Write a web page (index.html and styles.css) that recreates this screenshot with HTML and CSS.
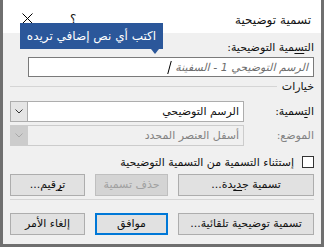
FILE: index.html
```html
<!DOCTYPE html>
<html lang="ar" dir="rtl">
<head>
  <meta charset="UTF-8">
  <title>تسمية توضيحية</title>
  <link rel="stylesheet" href="styles.css">
</head>
<body>
  <div class="dialog">
    <div class="titlebar">
      <span class="title">تسمية توضيحية</span>
      <div class="title-actions">
        <span class="help">؟</span>
        <svg class="close" width="11" height="11" viewBox="0 0 11 11">
          <path d="M0.5 0.5 L10.5 10.5 M10.5 0.5 L0.5 10.5" stroke="#000" stroke-width="1" fill="none"/>
        </svg>
      </div>
    </div>

    <div class="tooltip">اكتب أي نص إضافي تريده</div>

    <div class="content">
      <div class="field-label">الت<u>س</u>مية التوضيحية:</div>
      <div class="textbox">
        <span class="textbox-value">الرسم التوضيحي 1 - السفينة</span><span class="caret"></span>
      </div>

      <div class="group-head">
        <span>خيارات</span>
        <span class="group-line"></span>
      </div>

      <div class="select-row">
        <span class="select-label">ال<u>ت</u>سمية:</span>
        <div class="select">
          <span class="select-value">الرسم التوضيحي</span>
          <span class="select-arrow">
            <svg width="8" height="5" viewBox="0 0 8 5"><path d="M0.5 0.5 L4 4 L7.5 0.5" stroke="#333" fill="none"/></svg>
          </span>
        </div>
      </div>

      <div class="select-row disabled">
        <span class="select-label">الموضع:</span>
        <div class="select">
          <span class="select-value">أسفل العنصر المحدد</span>
          <span class="select-arrow">
            <svg width="8" height="5" viewBox="0 0 8 5"><path d="M0.5 0.5 L4 4 L7.5 0.5" stroke="#a8a8a8" fill="none"/></svg>
          </span>
        </div>
      </div>

      <div class="check-row">
        <span class="checkbox"></span>
        <span><u>إ</u>ستثناء التسمية من التسمية التوضيحية</span>
      </div>

      <div class="btn-row">
        <a href="#" class="btn">تسمية ج<u>دي</u>دة...</a>
        <a href="#" class="btn btn-disabled">حذف تسمية</a>
        <a href="#" class="btn">ت<u>ر</u>قيم...</a>
      </div>

      <div class="separator"></div>

      <div class="btn-row">
        <a href="#" class="btn">تسمية توضيحية تلقائية...</a>
        <a href="#" class="btn btn-default">موافق</a>
        <a href="#" class="btn">إلغاء الأمر</a>
      </div>
    </div>
  </div>
</body>
</html>
```

FILE: styles.css
```css
* {
  margin: 0;
  padding: 0;
  box-sizing: border-box;
}
body {
  font-family: 'DejaVu Sans', sans-serif;
  font-size: 11px;
  color: #111;
  background: #fff;
}
u {
  text-decoration: underline;
  text-underline-offset: 2px;
}
.dialog {
  position: relative;
  width: 324px;
  height: 247px;
  border: 3px solid #6f6f6f;
  border-top: none;
  background: #f0f0f0;
  display: flex;
  flex-direction: column;
}
.titlebar {
  height: 33px;
  background: #fff;
  display: flex;
  justify-content: space-between;
  align-items: center;
  padding: 0 10px 0 19px;
}
.title {
  font-size: 12px;
  padding-top: 7px;
}
.title-actions {
  display: flex;
  align-items: center;
  gap: 37px;
  padding-top: 4px;
}
.help {
  font-size: 12px;
}
.tooltip {
  position: absolute;
  left: 17px;
  top: 23px;
  width: 143px;
  height: 26px;
  background: #2b579a;
  color: #fff;
  font-size: 12px;
  line-height: 26px;
  text-align: center;
}
.tooltip::after {
  content: '';
  position: absolute;
  left: 131px;
  bottom: -5px;
  border-left: 4px solid transparent;
  border-right: 4px solid transparent;
  border-top: 5px solid #2b579a;
}
.content {
  flex: 1;
  padding: 8px 7px 0 7px;
  display: flex;
  flex-direction: column;
}
.field-label {
  height: 14px;
  line-height: 14px;
}
.textbox {
  margin-top: 2px;
  margin-left: 18px;
  height: 20px;
  background: #fff;
  border: 1px solid #7a7a7a;
  display: flex;
  align-items: center;
  padding-right: 5px;
}
.textbox-value {
  font-style: italic;
  color: #6d6d6d;
}
.caret {
  width: 1px;
  height: 13px;
  background: #000;
  margin-right: 5px;
  transform: skewX(-15deg);
}
.group-head {
  margin-top: 2px;
  height: 14px;
  display: flex;
  align-items: center;
  gap: 5px;
}
.group-line {
  flex: 1;
  height: 1px;
  background: #d5d5d5;
}
.select-row {
  display: flex;
  align-items: center;
  height: 21px;
  margin-top: 3px;
}
.group-head + .select-row {
  margin-top: 8px;
}
.select-label {
  width: 70px;
}
.select {
  flex: 1;
  height: 21px;
  background: #fff;
  border: 1px solid #adadad;
  display: flex;
  align-items: center;
  justify-content: space-between;
}
.select-value {
  padding-right: 4px;
}
.select-arrow {
  width: 17px;
  height: 100%;
  background: #e5e5e5;
  border-right: 1px solid #adadad;
  display: flex;
  align-items: center;
  justify-content: center;
}
.disabled .select-label,
.disabled .select-value {
  color: #838383;
}
.disabled .select {
  background: #f0f0f0;
  border-color: #cccccc;
}
.disabled .select-arrow {
  background: #cccccc;
  border-right-color: #cccccc;
}
.check-row {
  margin-top: 9px;
  height: 14px;
  display: flex;
  align-items: center;
  gap: 8px;
}
.checkbox {
  width: 12px;
  height: 12px;
  background: #fff;
  border: 1px solid #333;
}
.btn-row {
  display: grid;
  grid-template-columns: 1fr 73px 75px;
  gap: 10px;
  margin-top: 5px;
}
.separator + .btn-row {
  margin-top: 13px;
}
.btn {
  height: 22px;
  line-height: 20px;
  text-align: center;
  background: #e1e1e1;
  border: 1px solid #adadad;
  color: #111;
  text-decoration: none;
}
.btn-disabled {
  background: #d4d4d4;
  border-color: #bfbfbf;
  color: #a0a0a0;
}
.btn-default {
  border: 2px solid #0078d7;
  line-height: 18px;
}
.separator {
  margin-top: 3px;
  height: 1px;
  background: #d5d5d5;
}
```
